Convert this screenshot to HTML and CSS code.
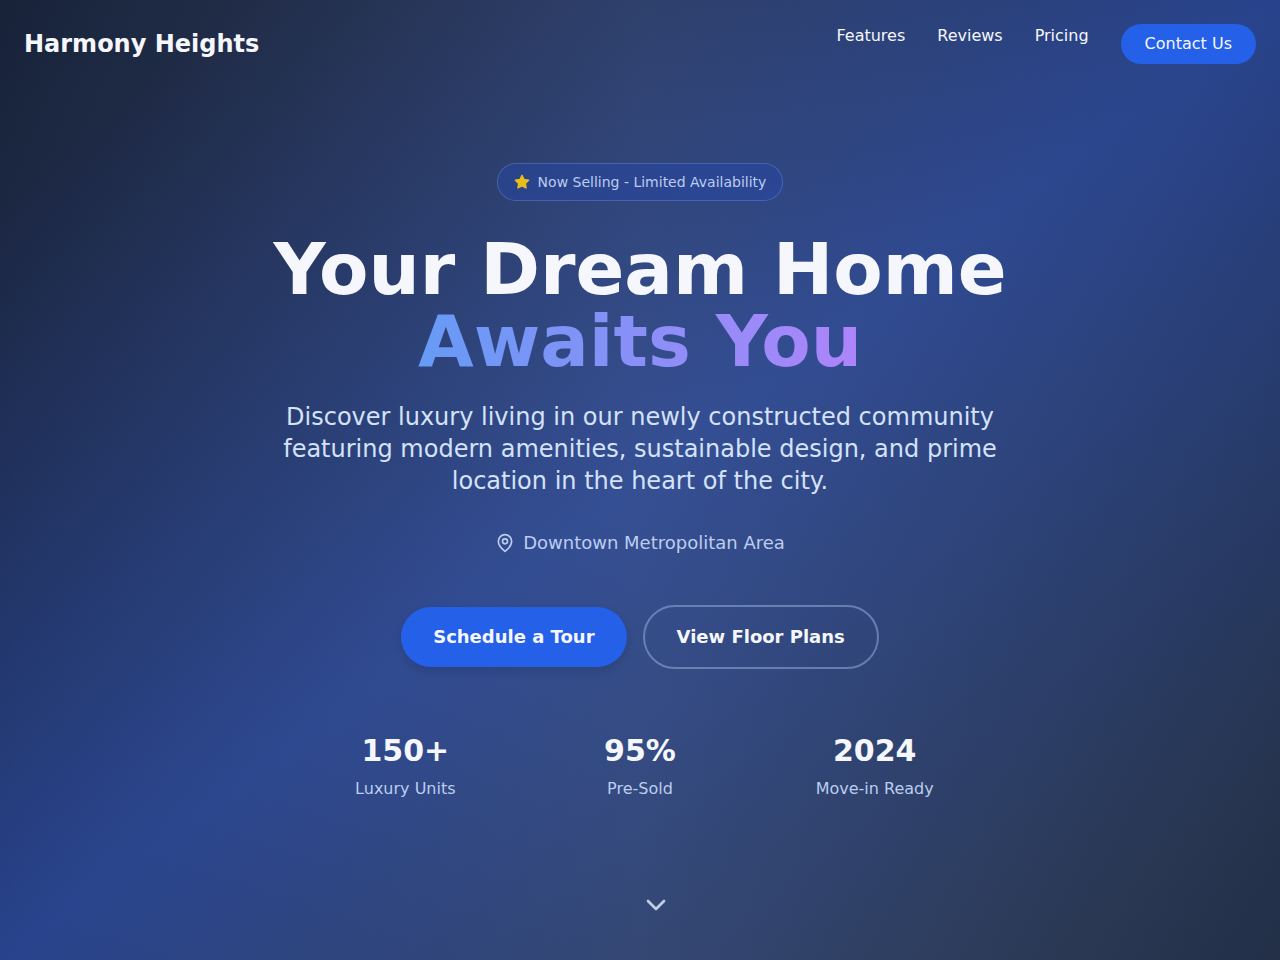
FILE: index.html
```html
<!DOCTYPE html>
<html lang="en">
<head>
    <meta charset="UTF-8">
    <meta name="viewport" content="width=device-width, initial-scale=1.0">
    <title>Harmony Heights</title>
    <link rel="stylesheet" href="styles.css">
</head>
<body>
    <div class="page">
        <header class="navbar">
            <div class="logo">Harmony Heights</div>
            <nav class="nav-links">
                <a href="#features">Features</a>
                <a href="#reviews">Reviews</a>
                <a href="#pricing">Pricing</a>
                <button class="contact-btn">Contact Us</button>
            </nav>
        </header>

        <main class="hero">
            <div class="badge">
                <svg class="star" viewBox="0 0 24 24" aria-hidden="true">
                    <path d="M12 2l3.09 6.26L22 9.27l-5 4.87 1.18 6.88L12 17.77l-6.18 3.25L7 14.14 2 9.27l6.91-1.01L12 2z"/>
                </svg>
                <span>Now Selling - Limited Availability</span>
            </div>

            <h1>Your Dream Home <span class="highlight">Awaits You</span></h1>

            <p class="subtitle">Discover luxury living in our newly constructed community featuring modern amenities, sustainable design, and prime location in the heart of the city.</p>

            <div class="location">
                <svg class="pin" viewBox="0 0 24 24" aria-hidden="true">
                    <path d="M20 10c0 6-8 12-8 12s-8-6-8-12a8 8 0 0 1 16 0Z"/>
                    <circle cx="12" cy="10" r="3"/>
                </svg>
                <span>Downtown Metropolitan Area</span>
            </div>

            <div class="actions">
                <button class="btn btn-primary">Schedule a Tour</button>
                <button class="btn btn-outline">View Floor Plans</button>
            </div>

            <div class="stats">
                <div class="stat">
                    <div class="stat-value">150+</div>
                    <div class="stat-label">Luxury Units</div>
                </div>
                <div class="stat">
                    <div class="stat-value">95%</div>
                    <div class="stat-label">Pre-Sold</div>
                </div>
                <div class="stat">
                    <div class="stat-value">2024</div>
                    <div class="stat-label">Move-in Ready</div>
                </div>
            </div>
        </main>

        <a class="scroll-down" href="#features" aria-label="Scroll down">
            <svg viewBox="0 0 24 24" aria-hidden="true">
                <path d="m6 9 6 6 6-6"/>
            </svg>
        </a>
    </div>
</body>
</html>
```
FILE: styles.css
```css
* {
    box-sizing: border-box;
}
body {
    margin: 0;
    font-family: "DejaVu Sans", sans-serif;
    font-size: 16px;
    line-height: 24px;
    color: #f5f7fc;
}
h1, p {
    margin: 0;
}
a {
    color: inherit;
    text-decoration: none;
}
button {
    font: inherit;
    color: inherit;
    border: none;
    cursor: pointer;
}
svg {
    display: block;
    fill: none;
    stroke: currentColor;
    stroke-width: 2;
    stroke-linecap: round;
    stroke-linejoin: round;
}

.page {
    position: relative;
    display: flex;
    flex-direction: column;
    min-height: 100vh;
    /* soft vertical glow in the middle over the diagonal gradient */
    background:
        linear-gradient(to right, rgba(125, 145, 190, 0), rgba(125, 145, 190, 0.16) 50%, rgba(125, 145, 190, 0)),
        linear-gradient(to bottom right, #18233a 0%, #1b2640 10%, #28438c 50%, #26344f 90%, #222f47 100%);
}

/* top bar */
.navbar {
    display: flex;
    justify-content: space-between;
    align-items: center;
    padding: 24px;
}
.logo {
    font-size: 24px;
    line-height: 32px;
    font-weight: bold;
}
.nav-links {
    display: flex;
    align-items: flex-start;
    gap: 32px;
}
.contact-btn {
    padding: 8px 24px;
    border-radius: 20px;
    background: #2460e8;
}

/* hero */
.hero {
    flex: 1;
    display: flex;
    flex-direction: column;
    align-items: center;
    padding: 75px 24px 120px;
    text-align: center;
}
.badge {
    display: flex;
    align-items: center;
    gap: 8px;
    padding: 8px 16px;
    margin-bottom: 32px;
    border: 1px solid rgba(96, 130, 210, 0.5);
    border-radius: 19px;
    background: rgba(37, 70, 165, 0.5);
    color: #bccdf0;
    font-size: 14px;
    line-height: 20px;
}
.star {
    width: 16px;
    height: 16px;
    fill: #eabd1c;
    stroke: #eabd1c;
}
h1 {
    max-width: 896px;
    margin-bottom: 24px;
    font-size: 72px;
    line-height: 72px;
    font-weight: bold;
}
.highlight {
    display: block;
    width: fit-content;
    margin: 0 auto;
    background: linear-gradient(to right, #669bf5, #ae84fa);
    -webkit-background-clip: text;
    background-clip: text;
    color: transparent;
}
.subtitle {
    max-width: 768px;
    margin-bottom: 32px;
    font-size: 24px;
    line-height: 32px;
    color: #d4e2fa;
}
.location {
    display: flex;
    align-items: center;
    gap: 8px;
    margin-bottom: 48px;
    font-size: 18px;
    line-height: 28px;
    color: #bccdf0;
}
.pin {
    width: 20px;
    height: 20px;
}
.actions {
    display: flex;
    flex-wrap: wrap;
    justify-content: center;
    align-items: center;
    gap: 16px;
    margin-bottom: 64px;
}
.btn {
    padding: 16px 32px;
    border-radius: 32px;
    font-size: 18px;
    line-height: 28px;
    font-weight: bold;
}
.btn-primary {
    background: #2460e8;
    box-shadow: 0 4px 8px rgba(15, 23, 42, 0.16);
}
.btn-outline {
    border: 2px solid rgba(160, 180, 225, 0.5);
    background: transparent;
}

.stats {
    display: grid;
    grid-template-columns: repeat(3, 1fr);
    gap: 32px;
    width: 100%;
    max-width: 672px;
}
.stat-value {
    margin-bottom: 8px;
    font-size: 30px;
    line-height: 36px;
    font-weight: bold;
}
.stat-label {
    color: #bccdf0;
}

.scroll-down {
    position: absolute;
    left: 50%;
    bottom: 39px;
    color: #c3cde4;
}
.scroll-down svg {
    width: 32px;
    height: 32px;
}
```
